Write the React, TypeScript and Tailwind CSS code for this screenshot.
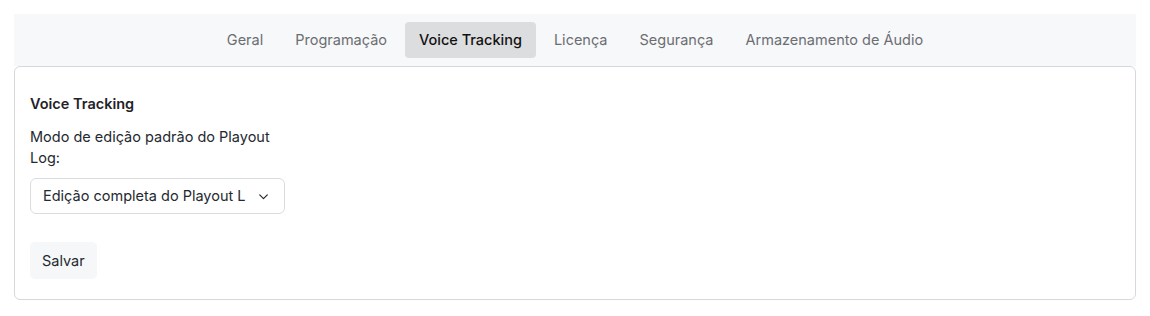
import React from "react";

const tabs = ["Geral", "Programação", "Voice Tracking", "Licença", "Segurança", "Armazenamento de Áudio"];

export default function App() {
  return (
    <div className="min-h-screen bg-white px-[14px] pt-[14px] text-[14.5px] text-[#1f2328]" style={{ fontFamily: "Inter, 'Noto Sans', sans-serif" }}>
      <div className="flex h-[52px] items-center justify-center gap-1 bg-[#f7f8f9] px-2">
        {tabs.map((t) => (
          <button
            key={t}
            className={
              t === "Voice Tracking"
                ? "h-9 rounded-[4px] bg-[#dcdddf] px-[14px] text-[14.5px] font-medium text-[#111]"
                : "h-9 rounded-[4px] px-[14px] text-[14.5px] text-[#6b6e72]"
            }
          >
            {t}
          </button>
        ))}
      </div>
      <div className="h-[234px] rounded-[6px] border border-[#d6d8da] px-[15px] pt-[27px]">
        <div className="h-5 text-[14.5px] font-semibold leading-5 text-[#1f2328]">Voice Tracking</div>
        <label className="mt-3 block w-[255px] text-[14.5px] leading-[21px] text-[#24292f]">
          Modo de edição padrão do Playout Log:
        </label>
        <div className="mt-[10px] flex h-9 w-[255px] items-center justify-between rounded-[6px] border border-[#dadcdf] pl-3 pr-[14px]">
          <span className="w-[208px] overflow-hidden whitespace-nowrap text-[14.5px] text-[#24292f]">
            Edição completa do Playout L
          </span>
          <svg width="13" height="13" viewBox="0 0 24 24" fill="none" stroke="#24292f" strokeWidth="2.2" strokeLinecap="round" strokeLinejoin="round">
            <path d="M5 9l7 7 7-7" />
          </svg>
        </div>
        <button className="mt-[28px] h-[37px] rounded-[5px] bg-[#f6f7f8] px-3 text-[14.5px] text-[#24292f]">Salvar</button>
      </div>
    </div>
  );
}
